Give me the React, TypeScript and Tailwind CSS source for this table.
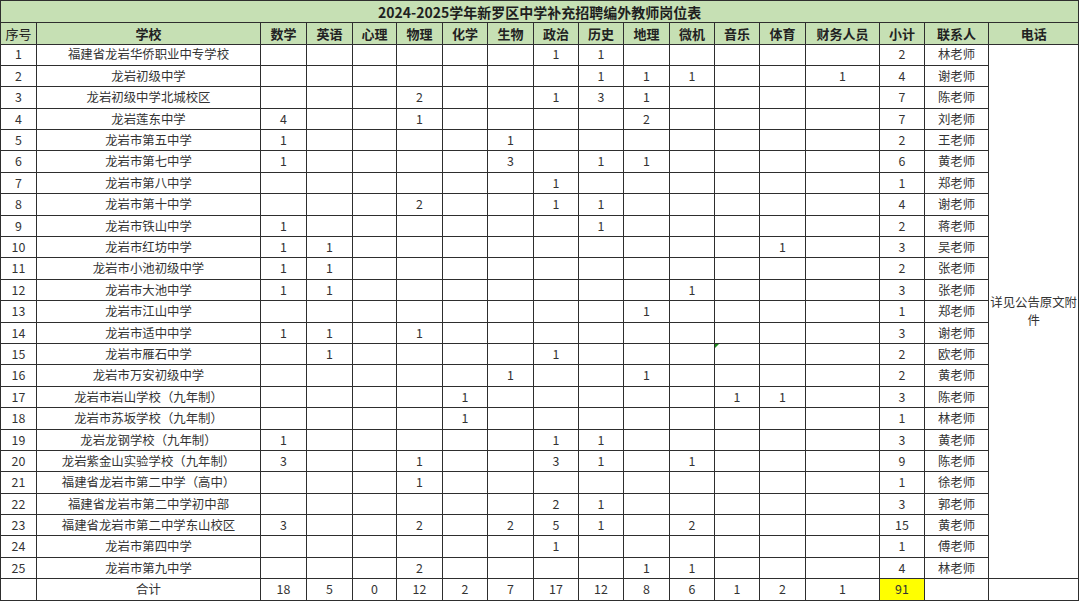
import React from "react";

const widths = [36, 224, 46, 46, 44, 46, 45, 46, 45, 45, 46, 45, 45, 46, 74, 45, 64, 90];
const headers = ["序号", "学校", "数学", "英语", "心理", "物理", "化学", "生物", "政治", "历史", "地理", "微机", "音乐", "体育", "财务人员", "小计", "联系人", "电话"];

type Row = { name: string; v: Record<number, number>; total: number; contact: string };
const S = { math: 0, eng: 1, psy: 2, phy: 3, chem: 4, bio: 5, pol: 6, his: 7, geo: 8, comp: 9, mus: 10, pe: 11, fin: 12 };

const rows: Row[] = [
  { name: "福建省龙岩华侨职业中专学校", v: { [S.pol]: 1, [S.his]: 1 }, total: 2, contact: "林老师" },
  { name: "龙岩初级中学", v: { [S.his]: 1, [S.geo]: 1, [S.comp]: 1, [S.fin]: 1 }, total: 4, contact: "谢老师" },
  { name: "龙岩初级中学北城校区", v: { [S.phy]: 2, [S.pol]: 1, [S.his]: 3, [S.geo]: 1 }, total: 7, contact: "陈老师" },
  { name: "龙岩莲东中学", v: { [S.math]: 4, [S.phy]: 1, [S.geo]: 2 }, total: 7, contact: "刘老师" },
  { name: "龙岩市第五中学", v: { [S.math]: 1, [S.bio]: 1 }, total: 2, contact: "王老师" },
  { name: "龙岩市第七中学", v: { [S.math]: 1, [S.bio]: 3, [S.his]: 1, [S.geo]: 1 }, total: 6, contact: "黄老师" },
  { name: "龙岩市第八中学", v: { [S.pol]: 1 }, total: 1, contact: "郑老师" },
  { name: "龙岩市第十中学", v: { [S.phy]: 2, [S.pol]: 1, [S.his]: 1 }, total: 4, contact: "谢老师" },
  { name: "龙岩市铁山中学", v: { [S.math]: 1, [S.his]: 1 }, total: 2, contact: "蒋老师" },
  { name: "龙岩市红坊中学", v: { [S.math]: 1, [S.eng]: 1, [S.pe]: 1 }, total: 3, contact: "吴老师" },
  { name: "龙岩市小池初级中学", v: { [S.math]: 1, [S.eng]: 1 }, total: 2, contact: "张老师" },
  { name: "龙岩市大池中学", v: { [S.math]: 1, [S.eng]: 1, [S.comp]: 1 }, total: 3, contact: "张老师" },
  { name: "龙岩市江山中学", v: { [S.geo]: 1 }, total: 1, contact: "郑老师" },
  { name: "龙岩市适中中学", v: { [S.math]: 1, [S.eng]: 1, [S.phy]: 1 }, total: 3, contact: "谢老师" },
  { name: "龙岩市雁石中学", v: { [S.eng]: 1, [S.pol]: 1 }, total: 2, contact: "欧老师" },
  { name: "龙岩市万安初级中学", v: { [S.bio]: 1, [S.geo]: 1 }, total: 2, contact: "黄老师" },
  { name: "龙岩市岩山学校（九年制）", v: { [S.chem]: 1, [S.mus]: 1, [S.pe]: 1 }, total: 3, contact: "陈老师" },
  { name: "龙岩市苏坂学校（九年制）", v: { [S.chem]: 1 }, total: 1, contact: "林老师" },
  { name: "龙岩龙钢学校（九年制）", v: { [S.math]: 1, [S.pol]: 1, [S.his]: 1 }, total: 3, contact: "黄老师" },
  { name: "龙岩紫金山实验学校（九年制）", v: { [S.math]: 3, [S.phy]: 1, [S.pol]: 3, [S.his]: 1, [S.comp]: 1 }, total: 9, contact: "陈老师" },
  { name: "福建省龙岩市第二中学（高中）", v: { [S.phy]: 1 }, total: 1, contact: "徐老师" },
  { name: "福建省龙岩市第二中学初中部", v: { [S.pol]: 2, [S.his]: 1 }, total: 3, contact: "郭老师" },
  { name: "福建省龙岩市第二中学东山校区", v: { [S.math]: 3, [S.phy]: 2, [S.bio]: 2, [S.pol]: 5, [S.his]: 1, [S.comp]: 2 }, total: 15, contact: "黄老师" },
  { name: "龙岩市第四中学", v: { [S.pol]: 1 }, total: 1, contact: "傅老师" },
  { name: "龙岩市第九中学", v: { [S.phy]: 2, [S.geo]: 1, [S.comp]: 1 }, total: 4, contact: "林老师" },
];

const totals = [18, 5, 0, 12, 2, 7, 17, 12, 8, 6, 1, 2, 1];

const td = "border border-[#2e2e2e] p-0 text-center align-middle whitespace-nowrap overflow-hidden";

export default function App() {
  return (
    <div
      className="w-[1080px] h-[601px] bg-white overflow-hidden text-[#333]"
      style={{ fontFamily: '"Noto Sans CJK SC", "Noto Sans", sans-serif' }}
    >
      <table className="table-fixed border-collapse w-[1078px] text-[12.4px] leading-none">
        <colgroup>
          {widths.map((w, i) => (
            <col key={i} style={{ width: w }} />
          ))}
        </colgroup>
        <tbody>
          <tr className="h-[22px] bg-[#c6e0b4]">
            <td colSpan={18} className={`${td} text-[14px] font-bold text-[#1f1f1f]`}>
              2024-2025学年新罗区中学补充招聘编外教师岗位表
            </td>
          </tr>
          <tr className="h-[21.5px] bg-[#c6e0b4]">
            {headers.map((h, i) => (
              <td key={i} className={`${td} text-[13px] ${i === 0 ? "font-normal" : "font-bold"} text-[#222]`}>
                {h}
              </td>
            ))}
          </tr>
          {rows.map((r, ri) => (
            <tr key={ri} className="h-[21.4px]">
              <td className={td}>{ri + 1}</td>
              <td className={td}>{r.name}</td>
              {Array.from({ length: 13 }).map((_, ci) => (
                <td key={ci} className={`${td} ${ri === 14 && ci === 10 ? "relative" : ""}`}>
                  {ri === 14 && ci === 10 && (
                    <span className="absolute left-0 top-0 w-0 h-0 border-t-[4px] border-r-[4px] border-t-[#1a8a1a] border-r-transparent" />
                  )}
                  {r.v[ci] ?? ""}
                </td>
              ))}
              <td className={td}>{r.total}</td>
              <td className={td}>{r.contact}</td>
              {ri === 0 && (
                <td rowSpan={25} className="border border-[#2e2e2e] p-0 text-center align-middle whitespace-normal leading-[18px]">
                  详见公告原文附件
                </td>
              )}
            </tr>
          ))}
          <tr className="h-[21.4px]">
            <td className={td}></td>
            <td className={td}>合计</td>
            {totals.map((t, i) => (
              <td key={i} className={td}>
                {t}
              </td>
            ))}
            <td className={`${td} bg-[#ffff00]`}>91</td>
            <td className={td}></td>
            <td className={td}></td>
          </tr>
        </tbody>
      </table>
    </div>
  );
}
